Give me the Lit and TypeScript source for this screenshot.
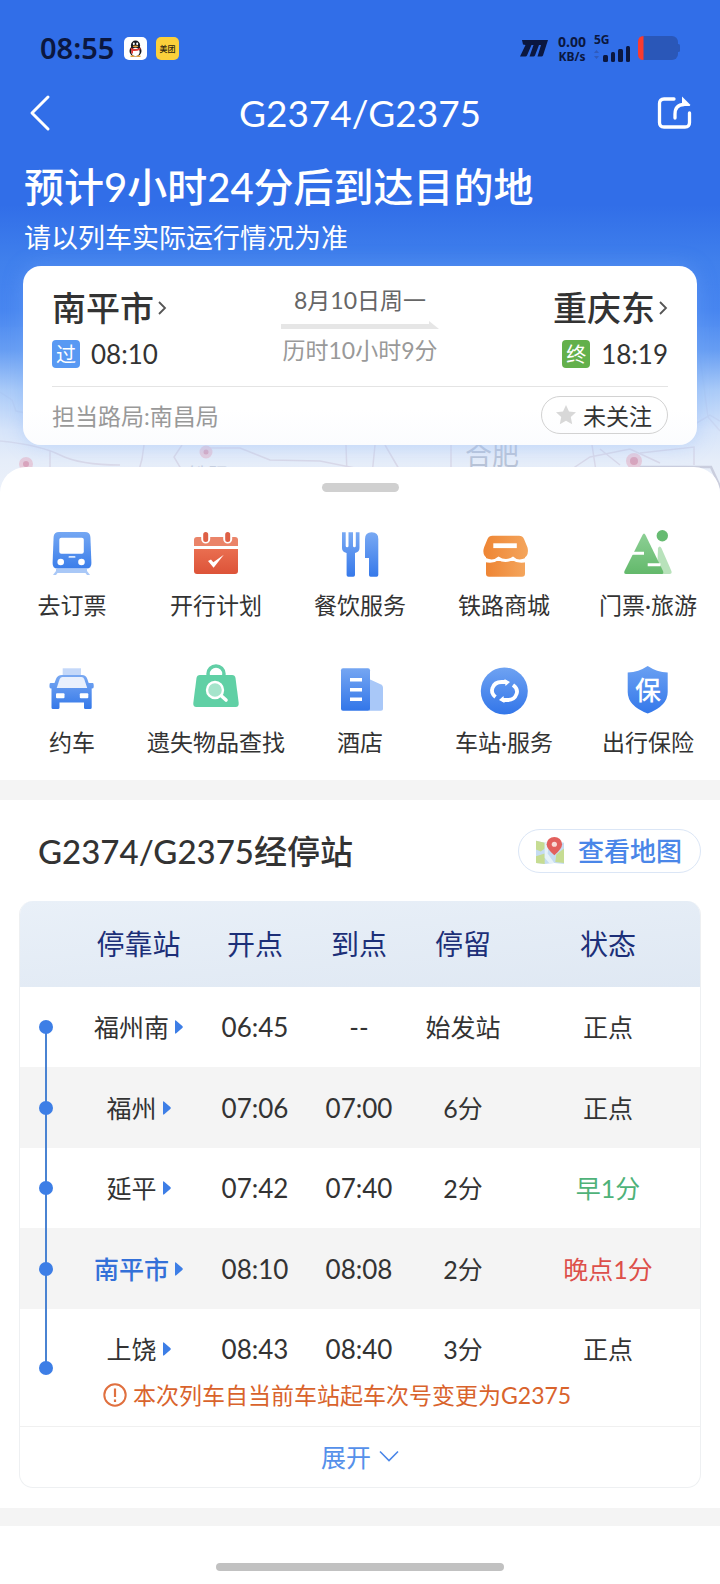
import { LitElement, html, svg, css, nothing } from "lit";
import type { SVGTemplateResult } from "lit";
import { customElement, property, state } from "lit/decorators.js";
import { classMap } from "lit/directives/class-map.js";

interface Stop {
  name: string;
  depart: string;
  arrive: string;
  stay: string;
  status: string;
  tone?: "early" | "late";
  current?: boolean;
  note?: string;
}

interface Service {
  label: string;
  icon: SVGTemplateResult;
}

const STOPS: Stop[] = [
  { name: "福州南", depart: "06:45", arrive: "--", stay: "始发站", status: "正点" },
  { name: "福州", depart: "07:06", arrive: "07:00", stay: "6分", status: "正点" },
  { name: "延平", depart: "07:42", arrive: "07:40", stay: "2分", status: "早1分", tone: "early" },
  { name: "南平市", depart: "08:10", arrive: "08:08", stay: "2分", status: "晚点1分", tone: "late", current: true },
  {
    name: "上饶",
    depart: "08:43",
    arrive: "08:40",
    stay: "3分",
    status: "正点",
    note: "本次列车自当前车站起车次号变更为G2375",
  },
];

const gradient = (id: string, from: string, to: string) => svg`
  <linearGradient id=${id} x1="0" y1="0" x2="0" y2="1">
    <stop offset="0" stop-color=${from} />
    <stop offset="1" stop-color=${to} />
  </linearGradient>`;

const SERVICES: Service[] = [
  {
    label: "去订票",
    icon: svg`
      <defs>${gradient("g", "#74a7f3", "#3b7eea")}</defs>
      <path d="M8 40h31v2l3 4h-3l-1.500-2h-28l-1.500 2H5l3-4z" fill="#a9c8f7" />
      <path fill="url(#g)" d="M11 3h26q5 0 5.400 5l1 26q.2 5.500-5 5.500H9.600q-5.200 0-5-5.500l1-26Q6 3 11 3z" />
      <rect x="11.300" y="8.700" width="24.500" height="16" rx="2" fill="#fff" />
      <rect x="20.500" y="27" width="7" height="1.800" rx=".9" fill="#dbe8fd" />
      <circle cx="12.700" cy="33" r="3.300" fill="#fff" /><circle cx="33.500" cy="33" r="3.300" fill="#fff" />`,
  },
  {
    label: "开行计划",
    icon: svg`
      <defs>${gradient("g", "#e96e50", "#dd5338")}</defs>
      <path d="M5 8h38q3 0 3 3v6H2v-6q0-3 3-3z" fill="#ea8469" />
      <path d="M2 20h44v22q0 3-3 3H5q-3 0-3-3z" fill="url(#g)" />
      <g stroke-linecap="round"><path d="M13.700 5v5M35.700 5v5" stroke="#fff" stroke-width="9" />
      <path d="M13.700 5.500v5M35.700 5.500v5" stroke="#de5f45" stroke-width="5" /></g>
      <path d="M16 32l3-1.500 2.300 2.800 10.500-7.500-10.200 13z" fill="#fff" />`,
  },
  {
    label: "餐饮服务",
    icon: svg`
      <defs>${gradient("g", "#79a9f3", "#3679ea")}</defs>
      <path fill="url(#g)" d="M6 3.300h3.700V17q0 1.300 1.400 1.300T12.500 17V3.300h4.500V17q0 1.300 1.400 1.300T19.800 17V3.300h3.700V19q0 4-4.500 5V46q0 1.700-1.700 1.700h-5Q10.600 47.700 10.600 46V24Q6 23 6 19z" />
      <path fill="url(#g)" d="M29 29V10q0-6.700 6.700-6.700T42.300 10v36q0 1.700-1.700 1.700h-6Q33 47.700 33 46V29z" />`,
  },
  {
    label: "铁路商城",
    icon: svg`
      <defs><linearGradient id="g" x1="0" y1="0" x2="1" y2="0"><stop offset="0" stop-color="#ee8534" /><stop offset="1" stop-color="#f4a55c" /></linearGradient></defs>
      <path fill="url(#g)" d="M6 28h39v16.700q0 3-3 3H9q-3 0-3-3z" />
      <path fill="none" stroke="#fff" stroke-width="4" d="M5 31q8 2 13.500-2 7 4 14 0 6 4 14 2" />
      <path fill="url(#g)" d="M12.500 6.700h26.500q3.500 0 5 3.300l3.500 8.500q2 8.500-5 11.500-5.500 1.500-9.500-2.500-7 5-14.500 0-4.500 4-9.500 2.500-7.500-3-5-11.500L7.500 10q1.500-3.300 5-3.300z" />
      <rect x="13.300" y="14.300" width="23.500" height="4.800" fill="#fff" />`,
  },
  {
    label: "门票·旅游",
    icon: svg`
      <defs>${gradient("g", "#8dcf95", "#63b96b")}</defs>
      <path d="M34 19q1.700-3 3.400 0l10 23q1 3-2 3H33z" fill="#b8e2bb" />
      <path d="M18.500 6q1.500-3 3 0L39 42q1 3-1 3H2q-2.500 0-1.500-3z" fill="url(#g)" />
      <circle cx="38.300" cy="6.700" r="5.700" fill="#67bb72" />
      <path d="M7.700 22.700H20v3H7.700zM23.700 34.300h12.800v3H23.700z" fill="#fff" />`,
  },
  {
    label: "约车",
    icon: svg`
      <defs>${gradient("g", "#7aa9f2", "#3478e9")}</defs>
      <rect x="14.700" y="2.300" width="18.300" height="7" fill="#c4d8f9" />
      <path fill="url(#g)" d="M14 9h20q4 0 5.300 4l1.400 4h4q1 0 1 2v2q0 1.500-2 1.500v19q0 1.500-1.500 1.500h-5Q36 43 36 41.500v-5H11.500v5q0 1.500-1.500 1.500H5q-1.500 0-1.500-1.500v-19q-2 0-2-1.500v-2q0-2 1-2h4L8 13q1.500-4 6-4z" />
      <path d="M14.500 11h19q2 0 2.700 2l3 9H8.700l3-9q.8-2 2.800-2z" fill="#e9f0fd" />
      <rect x="8" y="27.300" width="8.500" height="5" rx="1" fill="#fff" /><rect x="31.800" y="27.300" width="8.500" height="5" rx="1" fill="#fff" />`,
  },
  {
    label: "遗失物品查找",
    icon: svg`
      <circle cx="24" cy="8" r="8" fill="none" stroke="#62cfa6" stroke-width="3.500" />
      <path fill="#60d0a5" d="M8 9h32q3 0 3.500 3l3.200 25q.3 4-3 4H4.300q-3.300 0-3-4L4.500 12Q5 9 8 9z" />
      <circle cx="23" cy="24" r="8" fill="#a5e4cb" stroke="#fff" stroke-width="2.400" />
      <path d="M29.500 30l4.500 4" stroke="#fff" stroke-width="3.600" stroke-linecap="round" />`,
  },
  {
    label: "酒店",
    icon: svg`
      <defs>${gradient("g", "#75a6f2", "#3276e9")}</defs>
      <path d="M33 13l12 5.500q2 1 2 3V43q0 1.700-2 1.700H33z" fill="#a9c8f8" />
      <rect x="5" y="2.300" width="29" height="42.400" rx="2" fill="url(#g)" />
      <path d="M14 13.700h12M14 23.700h12M14 33.300h12" stroke="#fff" stroke-width="3.400" />`,
  },
  {
    label: "车站·服务",
    icon: svg`
      <defs>${gradient("g", "#6ea2f2", "#3376e9")}</defs>
      <circle cx="24.300" cy="25" r="23.500" fill="url(#g)" />
      <g fill="none" stroke="#fff" stroke-width="3.800"><path d="M15.500 31q-5-4-3-9 2-6 9-6h5" /><path d="M33 19q5.500 4 3.500 9-2 6-9 6h-5" /></g>
      <path d="M24.500 13l5.500 3-4.500 4zM24.500 37L19 34l4.500-4z" fill="#fff" />`,
  },
  {
    label: "出行保险",
    icon: svg`
      <defs>${gradient("g", "#6aa0f2", "#3478ea")}</defs>
      <path fill="url(#g)" d="M23.700 0q9 6 20 6.500V26q0 14-20 21.500Q3.700 40 3.700 26V6.500Q14.700 6 23.700 0z" />
      <text x="24" y="34" text-anchor="middle" class="glyph">保</text>`,
  },
];

/** One shortcut of the service grid. */
@customElement("service-item")
class ServiceItem extends LitElement {
  @property() label = "";
  @property({ attribute: false }) icon?: SVGTemplateResult;

  static styles = css`
    :host { display: block; min-width: 0; }
    .link {
      display: flex; flex-direction: column; align-items: center; gap: 12px;
      color: #333; text-decoration: none; white-space: nowrap;
      font-size: 23px; line-height: 32px;
    }
    .icon { width: 48px; height: 48px; overflow: visible; }
    .glyph { font-size: 26px; font-weight: 500; fill: #fff; }
  `;

  render() {
    return html`<a class="link" href="#">
      <svg class="icon" viewBox="0 0 48 48" aria-hidden="true">${this.icon}</svg>
      <span>${this.label}</span>
    </a>`;
  }
}

/** Table of the stations where the train calls. */
@customElement("stop-table")
class StopTable extends LitElement {
  @property({ attribute: false }) stops: Stop[] = [];

  static styles = css`
    :host { display: block; }
    .table { width: 100%; table-layout: fixed; border-collapse: separate; border-spacing: 0; color: #333; }
    .c-dot { width: 55px; }
    .c-name { width: 129px; }
    .c-time { width: 104px; }
    .head { background: linear-gradient(175deg, #e9f0f8, #dfe8f3); }
    th { height: 84px; padding: 0 0 2px; font-size: 28px; font-weight: 400; color: #1c2f78; }
    td { height: 80px; padding: 0; text-align: center; font-size: 25px; line-height: 36px; }
    .striped td { height: 81px; background: #f4f4f4; }
    td.time { font-size: 26px; }
    .with-note td { height: 70px; vertical-align: bottom; }
    .with-note td.name, .with-note td.plain { height: 58px; padding-bottom: 0; }
    .early { color: #4fb279; }
    .late { color: #dd4f4a; }
    td.track {
      padding: 0; vertical-align: middle;
      background-image: linear-gradient(#4a83d2, #4a83d2);
      background-repeat: no-repeat; background-size: 2px 100%; background-position: 26px 0;
    }
    tr.first td.track { background-size: 2px 50%; background-position: 26px 100%; }
    tr.last td.track { background-size: 2px 50%; }
    .dot { display: block; width: 14px; height: 14px; margin: 0 auto 0 20px; border-radius: 50%; background: #3d7ee6; }
    .station {
      display: inline-flex; align-items: center; gap: 6px; padding: 0; border: 0;
      background: none; color: inherit; font: inherit; white-space: nowrap; cursor: pointer;
    }
    .station.current { color: #3370d8; font-weight: 500; }
    .arrow { width: 8px; height: 14px; }
    .note td { height: 59px; padding: 0 0 0 29px; text-align: left; vertical-align: top; color: #d9632c; font-size: 23px; }
    .warning { display: flex; align-items: center; gap: 6px; padding-top: 10px; white-space: nowrap; }
    .warn-icon { width: 24px; height: 24px; flex: none; }
  `;

  private row(stop: Stop, index: number) {
    const classes = classMap({
      first: index === 0,
      last: index === this.stops.length - 1,
      striped: index % 2 === 1,
      "with-note": !!stop.note,
    });
    return html`
      <tr class=${classes}>
        <td class="track" rowspan=${stop.note ? 2 : 1}><span class="dot"></span></td>
        <td class="name">
          <button class=${classMap({ station: true, current: !!stop.current })}>
            ${stop.name}
            <svg class="arrow" viewBox="0 0 8 14" aria-hidden="true">
              <path d="M0 1.500Q0-.5 1.500 1L7.300 6q1 1 0 2L1.500 13Q0 14.500 0 12.500z" fill="#3d7ee6" />
            </svg>
          </button>
        </td>
        <td class="plain time">${stop.depart}</td>
        <td class="plain time">${stop.arrive}</td>
        <td class="plain">${stop.stay}</td>
        <td class="plain ${stop.tone ?? ""}">${stop.status}</td>
      </tr>
      ${stop.note
        ? html`<tr class="note">
            <td colspan="5">
              <span class="warning">
                <svg class="warn-icon" viewBox="0 0 24 24" aria-hidden="true">
                  <circle cx="12" cy="12" r="10.700" fill="none" stroke="#e0703f" stroke-width="2" />
                  <path d="M12 5.500v8.500M12 16.500v2.500" stroke="#e0703f" stroke-width="2.200" />
                </svg>
                ${stop.note}
              </span>
            </td>
          </tr>`
        : nothing}
    `;
  }

  render() {
    return html`<table class="table">
      <colgroup>
        <col class="c-dot" /><col class="c-name" /><col class="c-time" /><col class="c-time" /><col class="c-time" /><col />
      </colgroup>
      <thead>
        <tr class="head">
          <th></th>
          <th scope="col">停靠站</th>
          <th scope="col">开点</th>
          <th scope="col">到点</th>
          <th scope="col">停留</th>
          <th scope="col">状态</th>
        </tr>
      </thead>
      <tbody>
        ${this.stops.map((stop, i) => this.row(stop, i))}
      </tbody>
    </table>`;
  }
}

@customElement("app-root")
class AppRoot extends LitElement {
  @state() private followed = false;

  static styles = css`
    :host {
      display: block; background: #fff; color: #333;
      font-family: Lato, "Noto Sans CJK SC", sans-serif;
    }
    h1, h2, p { margin: 0; }
    button { font: inherit; color: inherit; background: none; border: 0; padding: 0; cursor: pointer; }
    svg { display: block; }

    .hero {
      position: relative; isolation: isolate; padding-bottom: 62px; overflow: hidden;
      background: #316ee8;
    }
    .map { position: absolute; z-index: -2; left: 0; bottom: 0; width: 100%; height: 180px; }
    .fade {
      position: absolute; z-index: -1; inset: 0;
      background: linear-gradient(
        #316ee8 0, #316ee8 205px, #4080ec 262px, #4886f0 310px,
        rgba(100, 156, 243, 0.98) 350px, rgba(165, 200, 248, 0.92) 390px, rgba(208, 225, 251, 0.75) 430px, rgba(226, 236, 251, 0.5) 460px, rgba(244, 248, 254, 0.4) 500px
      );
    }

    .status {
      display: flex; align-items: center; padding: 32px 40px 0; height: 32px; gap: 10px;
      font-family: "Noto Sans", sans-serif; font-weight: 600; color: #0b1740;
    }
    .clock { font-size: 29px; line-height: 32px; }
    .app { width: 23px; height: 23px; }
    .apps { display: flex; gap: 9px; }
    .brand-text { font: 500 8px "Noto Sans CJK SC", sans-serif; fill: #2c2410; }
    .signals { display: flex; align-items: center; margin-left: auto; gap: 8px; }
    .speed { display: flex; flex-direction: column; align-items: center; gap: 1px; font-size: 14px; line-height: 15px; font-weight: 700; margin-left: 2px; }
    .speed-unit { font-size: 12px; line-height: 13px; }
    .cell { display: flex; flex-direction: column; font-size: 12px; line-height: 12px; font-weight: 700; }

    .bar { display: grid; grid-template-columns: 1fr auto 1fr; align-items: center; height: 50px; margin-top: 24px; padding: 0 28px; color: #fff; }
    .bar .share { justify-self: end; }
    .train { font-size: 37px; line-height: 50px; font-weight: 400; }
    .eta { padding: 23px 24px 0; font-size: 40px; line-height: 52px; font-weight: 500; color: #fff; }
    .hint { padding: 7px 24px 0; font-size: 27px; line-height: 36px; color: #fff; }

    .card {
      margin: 10px 23px 0; padding: 18px 29px 0; border-radius: 18px;
      background: linear-gradient(#fff 80%, #fbfcfe);
      box-shadow: 0 0 20px rgba(120, 170, 250, 0.35);
    }
    .trip { display: grid; grid-template-columns: 1fr auto 1fr; align-items: start; padding-bottom: 18px; border-bottom: 1px solid #e4e4e4; }
    .end { display: flex; flex-direction: column; gap: 8px; align-items: flex-start; }
    .end.to { align-items: flex-end; }
    .city { display: flex; align-items: center; gap: 4px; font-size: 34px; line-height: 48px; font-weight: 500; }
    .when { display: flex; align-items: center; gap: 11px; font-size: 26px; line-height: 28px; }
    .tag { width: 28px; height: 28px; border-radius: 4px; font-size: 20px; line-height: 28px; text-align: center; color: #fff; background: #5899f3; }
    .tag.final { background: #63b04b; }
    .middle { display: flex; flex-direction: column; align-items: center; padding-top: 1px; gap: 6px; font-size: 23px; line-height: 30px; color: #666; }
    .duration { color: #999; }
    .foot { display: flex; align-items: center; justify-content: space-between; height: 56px; padding-bottom: 2px; font-size: 23px; color: #999; }
    .follow {
      display: flex; align-items: center; gap: 6px; height: 38px; padding: 0 15px 0 13px;
      border: 1px solid #d2d2d2; border-radius: 20px; color: #333;
    }

    .sheet { position: relative; margin-top: -40px; padding: 16px 0 22px; border-radius: 26px 26px 0 0; background: #fff; }
    .handle { width: 77px; height: 9px; margin: 0 auto 37px; border-radius: 5px; background: #d0d0d0; }
    .services { display: grid; grid-template-columns: repeat(5, 1fr); row-gap: 45px; }

    .band { height: 20px; background: #f4f4f4; }
    .stops { padding: 29px 19px 20px; }
    .stops-head { display: flex; align-items: center; justify-content: space-between; padding-left: 19px; margin-bottom: 28px; }
    .stops-title { font-size: 33px; line-height: 44px; font-weight: 500; }
    .map-button {
      display: flex; align-items: center; gap: 13px; height: 44px; padding: 0 18px 0 16px; box-sizing: border-box;
      border: 1px solid #dbe6f6; border-radius: 22px; font-size: 26px; line-height: 40px; font-weight: 500; color: #4a86e8;
    }
    .box { border: 1px solid #eef0f2; border-top: 0; border-radius: 14px; overflow: hidden; }
    .box stop-table { margin: 0 -1px; }
    .expand {
      display: flex; align-items: center; justify-content: center; gap: 8px; width: 100%; height: 61px; padding-bottom: 3px;
      border-top: 1px solid #f0f0f0; font-size: 25px; color: #5590ea;
    }
    .home { padding: 37px 0 14px; }
    .home-bar { width: 40%; height: 8px; margin: 0 auto; border-radius: 4px; background: #c1c1c1; }
    .place { font-size: 27px; fill: #8f9bb4; }
    .place.small { font-size: 20px; fill: #a9b2c6; }
    .band.thin { height: 18px; }
  `;

  private chevron() {
    return html`<svg width="9" height="16" viewBox="0 0 9 16" aria-hidden="true">
      <path d="M1 2l6 6-6 6" fill="none" stroke="#555" stroke-width="1.800" />
    </svg>`;
  }

  private statusBar() {
    return html`<div class="status">
      <span class="clock">08:55</span>
      <span class="apps">
        <svg class="app" viewBox="0 0 23 23" aria-hidden="true">
          <rect width="23" height="23" rx="5" fill="#fff" />
          <ellipse cx="11.500" cy="14" rx="6" ry="5.500" fill="#15171c" />
          <ellipse cx="11.500" cy="8.500" rx="4.600" ry="5" fill="#15171c" />
          <ellipse cx="11.500" cy="15" rx="4.200" ry="4.200" fill="#fff" />
          <ellipse cx="9.800" cy="6.800" rx="1" ry="1.400" fill="#fff" /><ellipse cx="13.200" cy="6.800" rx="1" ry="1.400" fill="#fff" />
          <ellipse cx="11.500" cy="9.300" rx="2.800" ry=".9" fill="#e7a23a" />
          <path d="M6.500 10.500q5 3 10 0v2q-4 2-7.500 1.500v2.500H7.300v-3z" fill="#e23a35" />
          <path d="M6.500 19.300h4M12.500 19.300h4" stroke="#e7a23a" stroke-width="1.400" />
        </svg>
        <svg class="app" viewBox="0 0 23 23" aria-hidden="true">
          <rect width="23" height="23" rx="5" fill="#fbd03b" />
          <text class="brand-text" x="11.500" y="15" text-anchor="middle">美团</text>
        </svg>
      </span>
      <span class="signals">
        <svg width="28" height="17" viewBox="0 0 28 17" aria-hidden="true">
          <path d="M2 0h26L23 15.500q-.5 1-1.500 1h-4L21 5h-2l-4 10.500q-.5 1-1.500 1H9.500L13.500 5h-2L7 15.500q-.5 1-1.500 1H0L5.500 5 3 4.500z" fill="#0b1740" />
        </svg>
        <span class="speed"><span>0.00</span><span class="speed-unit">KB/s</span></span>
        <span class="cell">
          5G
          <svg width="36" height="16" viewBox="0 0 36 16" aria-hidden="true">
            <path d="M0 7l2.500-3L5 7zM0 10l2.500 3L5 10z" fill="#2f5bbd" />
            <g fill="#0b1740"><rect x="9" y="9" width="5" height="7" rx="1.500" /><rect x="17" y="6" width="4" height="10" rx="1.500" /><rect x="24" y="3" width="5" height="13" rx="1.500" /><rect x="32" y="0" width="4" height="16" rx="1.500" /></g>
          </svg>
        </span>
        <svg width="42" height="24" viewBox="0 0 42 24" aria-hidden="true">
          <rect width="40" height="24" rx="6" fill="#2a57b8" />
          <rect x="39" y="8" width="3" height="8" rx="1.500" fill="#2a57b8" />
          <path d="M5.500 0v24Q0 24 0 18V6q0-6 5.500-6z" fill="#fb3b2f" />
        </svg>
      </span>
    </div>`;
  }

  private mapBackdrop() {
    return html`<svg class="map" viewBox="0 0 720 180" preserveAspectRatio="xMidYMax slice" aria-hidden="true">
      <rect width="720" height="180" fill="#e9eef7" />
      <g fill="none" stroke="#cfc5d6" stroke-width="1.500">
        <path d="M0 65l12 8 4 11 14 3M0 114q40 4 60 14t60 10M50 124v30M144 118l-2 14-6 22M182 118l-8 12 6 10-6 14M210 121h30l30 12 50 1 40 8M346 118l1 30M375 118l-3 30M385 118l14 24M451 118v28" />
        <path d="M700 30l8 60 12 14M690 100l20-12 10 6M560 150l30-20 40-8 30 14M592 118l4 26M600 122l20 16" />
        <path d="M633 140h78l10 22" stroke="#b0afc2" stroke-width="2.500" />
        <path d="M640 126l54-6v18" />
      </g>
      <g fill="#cf5f80" stroke="#e6aabc" stroke-width="4"><circle cx="26" cy="137" r="5" /><circle cx="206" cy="125" r="4.500" /><circle cx="634" cy="134" r="6" /></g>
      <text class="place" x="465" y="138">合肥</text>
      <text class="place small" x="188" y="156">铁阳</text>
    </svg>`;
  }

  render() {
    return html`
      <header class="hero">
        ${this.mapBackdrop()}
        <div class="fade"></div>
        ${this.statusBar()}
        <nav class="bar">
          <button aria-label="返回">
            <svg width="24" height="38" viewBox="0 0 24 38"><path d="M20 3L4 19l16 16" fill="none" stroke="#fff" stroke-width="3" stroke-linecap="round" stroke-linejoin="round" /></svg>
          </button>
          <h1 class="train">G2374/G2375</h1>
          <button class="share" aria-label="分享">
            <svg width="36" height="36" viewBox="0 0 36 36">
              <path d="M18 4H8Q3.500 4 3.500 8.500v19q0 4.500 4.500 4.500h21q4.500 0 4.500-4.500V18" fill="none" stroke="#fff" stroke-width="3.300" stroke-linecap="round" />
              <path d="M19 23v-4q0-9.500 9-9.500" fill="none" stroke="#fff" stroke-width="3.300" stroke-linecap="round" />
              <path d="M26 1.500L34 9.500q.8 1.500-1 1.500h-7z" fill="#fff" />
            </svg>
          </button>
        </nav>
        <p class="eta">预计9小时24分后到达目的地</p>
        <p class="hint">请以列车实际运行情况为准</p>
        <section class="card">
          <div class="trip">
            <div class="end">
              <button class="city">南平市${this.chevron()}</button>
              <div class="when"><span class="tag">过</span>08:10</div>
            </div>
            <div class="middle">
              <span>8月10日周一</span>
              <svg width="158" height="8" viewBox="0 0 158 8" aria-hidden="true"><path d="M0 3h148V0l10 8H0z" fill="#e6e6e6" /></svg>
              <span class="duration">历时10小时9分</span>
            </div>
            <div class="end to">
              <button class="city">重庆东${this.chevron()}</button>
              <div class="when"><span class="tag final">终</span>18:19</div>
            </div>
          </div>
          <div class="foot">
            <span>担当路局:南昌局</span>
            <button class="follow" aria-pressed=${this.followed} @click=${() => (this.followed = !this.followed)}>
              <svg width="22" height="22" viewBox="0 0 22 22" aria-hidden="true">
                <path d="M11 1l3 6.500 7 .8-5.200 4.800 1.400 7.100L11 16.700l-6.200 3.500 1.400-7.100L1 8.300l7-.8z" fill=${this.followed ? "#f5b83d" : "#d8d8d8"} />
              </svg>
              ${this.followed ? "已关注" : "未关注"}
            </button>
          </div>
        </section>
      </header>

      <main class="sheet">
        <div class="handle"></div>
        <nav class="services">
          ${SERVICES.map((s) => html`<service-item .label=${s.label} .icon=${s.icon}></service-item>`)}
        </nav>
      </main>

      <div class="band"></div>

      <section class="stops">
        <div class="stops-head">
          <h2 class="stops-title">G2374/G2375经停站</h2>
          <button class="map-button">
            <svg width="30" height="28" viewBox="0 0 31 29" aria-hidden="true">
              <path d="M1 4l9 2 10-2 10 2v22l-10-1-10 1-9-1z" fill="#c5dcf2" />
              <path d="M1 4l9 2v6l-4 3-5-2zM1 20l9-3v11l-9-1zM22 18l8-6v15l-9-1z" fill="#c6dc92" />
              <path d="M10 6l5-1-2 12 7 10-5 .5-5-6zM1 15l9 4" fill="#e6f2f8" />
              <path d="M20 19q-8-7-8-11.500a8 7.500 0 0 1 16 0Q28 12 20 19z" fill="#e2605d" />
              <circle cx="20" cy="7.500" r="2.700" fill="#f8dcd8" />
            </svg>
            查看地图
          </button>
        </div>
        <div class="box">
          <stop-table .stops=${STOPS}></stop-table>
          <button class="expand">
            展开
            <svg width="20" height="12" viewBox="0 0 20 12" aria-hidden="true"><path d="M1 1.500l9 9 9-9" fill="none" stroke="#4a86e8" stroke-width="1.600" /></svg>
          </button>
        </div>
      </section>

      <div class="band thin"></div>
      <footer class="home"><div class="home-bar"></div></footer>
    `;
  }
}
